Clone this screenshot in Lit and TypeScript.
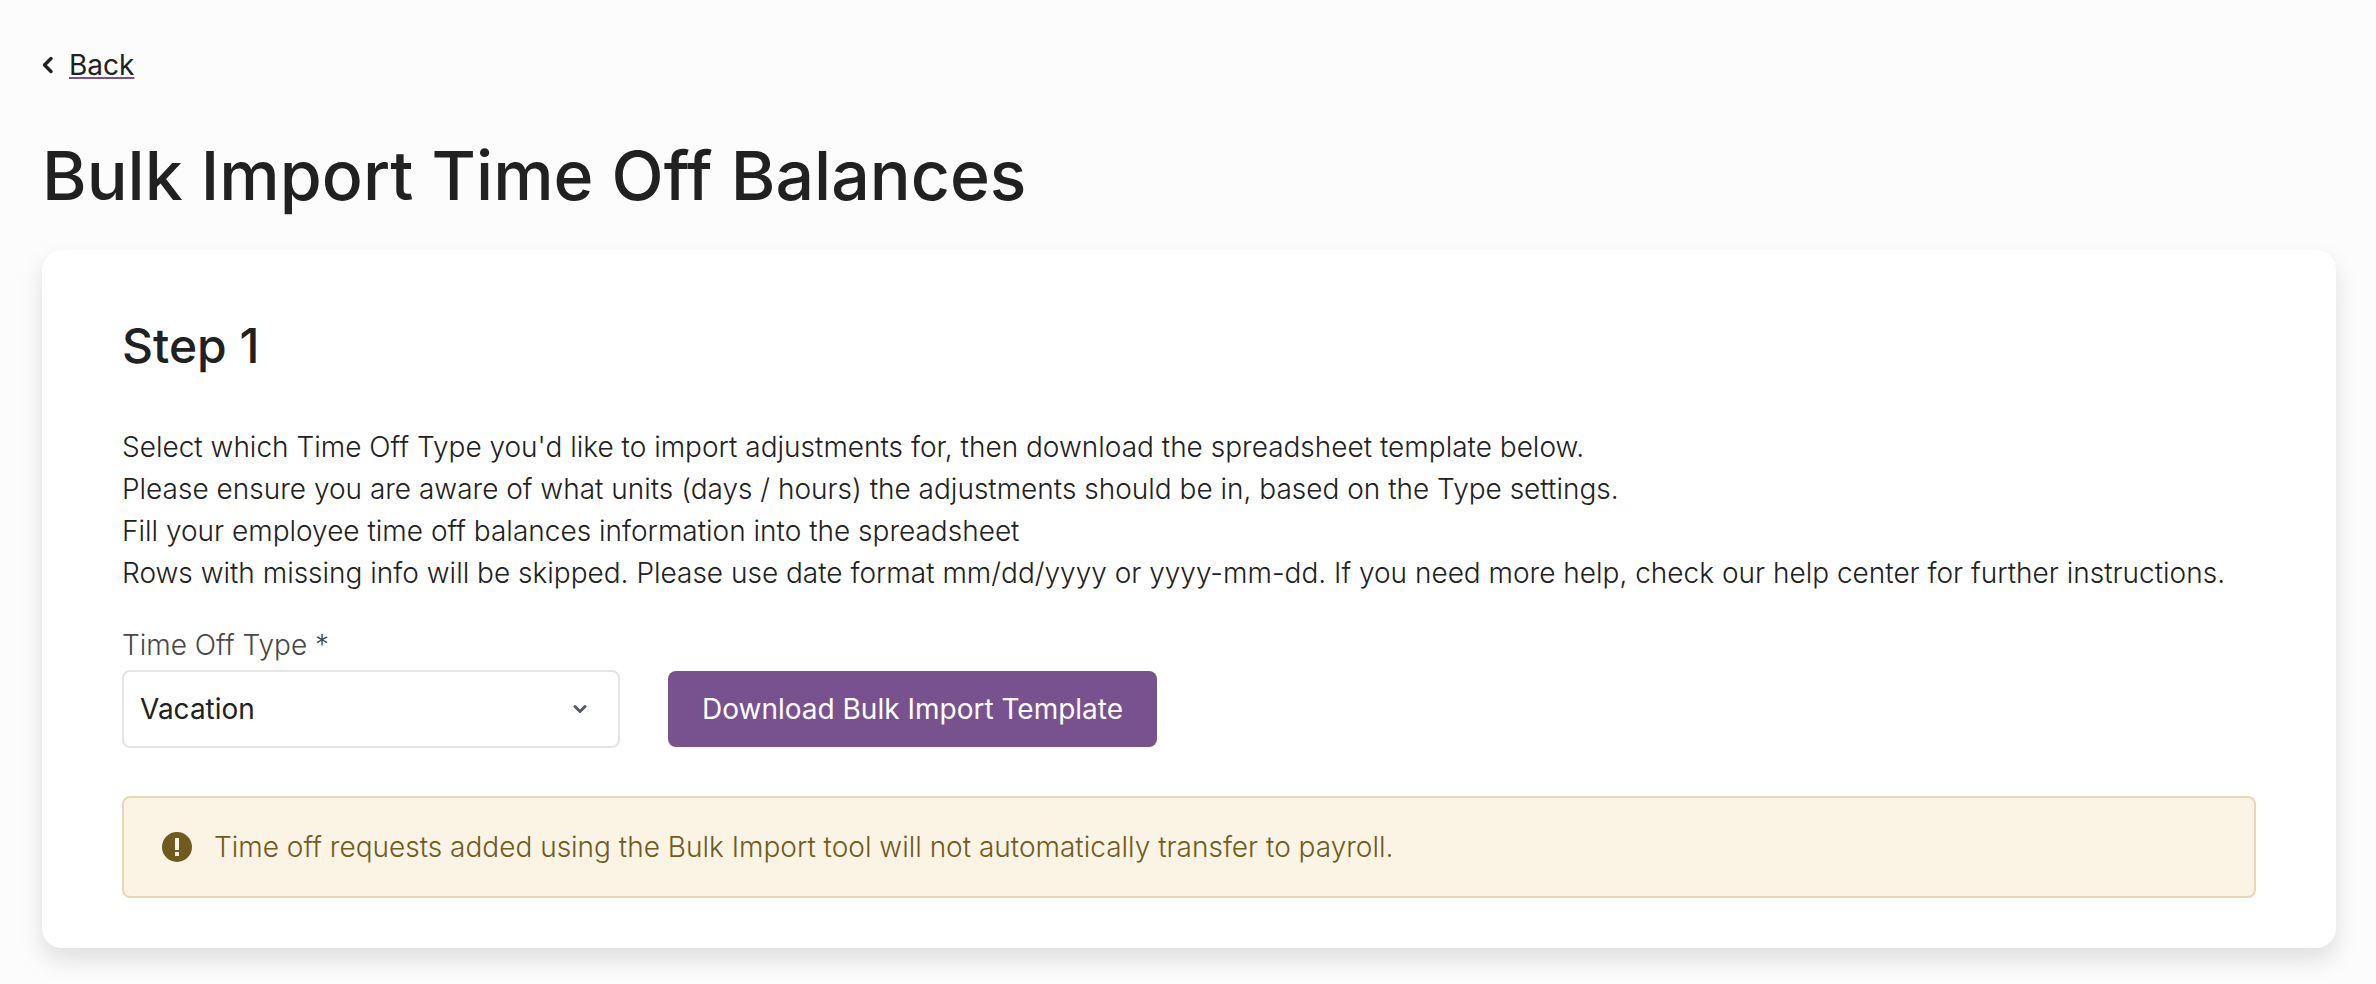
import { LitElement, html, css } from "lit";
import { customElement, state } from "lit/decorators.js";

const INSTRUCTIONS = [
  "Select which Time Off Type you'd like to import adjustments for, then download the spreadsheet template below.",
  "Please ensure you are aware of what units (days / hours) the adjustments should be in, based on the Type settings.",
  "Fill your employee time off balances information into the spreadsheet",
  "Rows with missing info will be skipped. Please use date format mm/dd/yyyy or yyyy-mm-dd. If you need more help, check our help center for further instructions.",
];

@customElement("app-root")
export class AppRoot extends LitElement {
  static styles = css`
    :host {
      display: block;
      box-sizing: border-box;
      min-height: 100vh;
      padding: 44px 40px 34px 42px;
      background: #fcfcfc;
      color: #212121;
      font: 300 28px/42px Inter, "Liberation Sans", sans-serif;
    }
    * {
      box-sizing: border-box;
    }
    .back {
      display: inline-flex;
      align-items: center;
      gap: 14px;
      color: inherit;
      font-weight: 400;
      text-decoration: none;
    }
    .back-text {
      text-decoration: underline;
      text-decoration-color: #78528f;
      text-decoration-thickness: 2px;
      text-underline-offset: 2px;
      text-decoration-skip-ink: none;
    }
    .icon {
      display: block;
      flex: none;
    }
    .title {
      margin: 48px 0 34px;
      font-size: 68px;
      line-height: 82px;
      font-weight: 500;
    }
    .card {
      padding: 66px 80px 50px;
      border-radius: 20px;
      background: #fff;
      box-shadow: 0 12px 24px rgba(0, 0, 0, 0.12);
    }
    .step {
      margin: 0 0 50px;
      font-size: 48px;
      line-height: 60px;
      font-weight: 500;
    }
    .line {
      margin: 0;
    }
    .form {
      display: grid;
      grid-template-columns: 498px auto;
      justify-content: start;
      align-items: center;
      column-gap: 48px;
      row-gap: 4px;
      margin: 30px 0 48px;
    }
    .label {
      grid-column: 1 / -1;
      color: #484848;
    }
    .picker {
      display: grid;
      align-items: center;
    }
    .picker > * {
      grid-area: 1 / 1;
    }
    .select {
      appearance: none;
      width: 100%;
      height: 78px;
      padding: 0 64px 0 16px;
      border: 2px solid #e5e5e5;
      border-radius: 8px;
      background: #fff;
      color: inherit;
      font: inherit;
      font-weight: 400;
    }
    .caret {
      justify-self: end;
      margin-right: 32px;
      pointer-events: none;
    }
    .button {
      height: 76px;
      padding: 0 34px;
      border: 0;
      border-radius: 8px;
      background: #78528f;
      color: #fff;
      font: inherit;
      font-weight: 400;
      white-space: nowrap;
    }
    .notice {
      display: flex;
      align-items: center;
      gap: 22px;
      padding: 28px 38px;
      border: 2px solid #e8d8b4;
      border-radius: 8px;
      background: #fbf3e4;
      color: #6f5b1d;
    }
  `;

  @state() private type = "Vacation";

  private onType(e: Event) {
    this.type = (e.target as HTMLSelectElement).value;
  }

  render() {
    return html`
      <a class="back" href="#">
        <svg class="icon" width="13" height="20" viewBox="0 0 13 20" aria-hidden="true">
          <path d="M9 3.5 2.5 10 9 16.5" fill="none" stroke="#212121" stroke-width="3.4" stroke-linecap="round" stroke-linejoin="round" />
        </svg>
        <span class="back-text">Back</span>
      </a>
      <h1 class="title">Bulk Import Time Off Balances</h1>
      <section class="card">
        <h2 class="step">Step 1</h2>
        ${INSTRUCTIONS.map((text) => html`<p class="line">${text}</p>`)}
        <div class="form">
          <label class="label" for="type">Time Off Type *</label>
          <div class="picker">
            <select class="select" id="type" required .value=${this.type} @change=${this.onType}>
              <option>Vacation</option>
            </select>
            <svg class="icon caret" width="16" height="12" viewBox="0 0 16 12" aria-hidden="true">
              <path d="M3 3.5 8 8.5 13 3.5" fill="none" stroke="#545867" stroke-width="3" stroke-linecap="round" stroke-linejoin="round" />
            </svg>
          </div>
          <button class="button" type="button">Download Bulk Import Template</button>
        </div>
        <div class="notice" role="status">
          <svg class="icon" width="30" height="30" viewBox="0 0 30 30" aria-hidden="true">
            <circle cx="15" cy="15" r="15" fill="#6f5b1d" />
            <path d="M13 6h4v12h-4zM13 20h4v4h-4z" fill="#fbf3e4" />
          </svg>
          <span>Time off requests added using the Bulk Import tool will not automatically transfer to payroll.</span>
        </div>
      </section>
    `;
  }
}
